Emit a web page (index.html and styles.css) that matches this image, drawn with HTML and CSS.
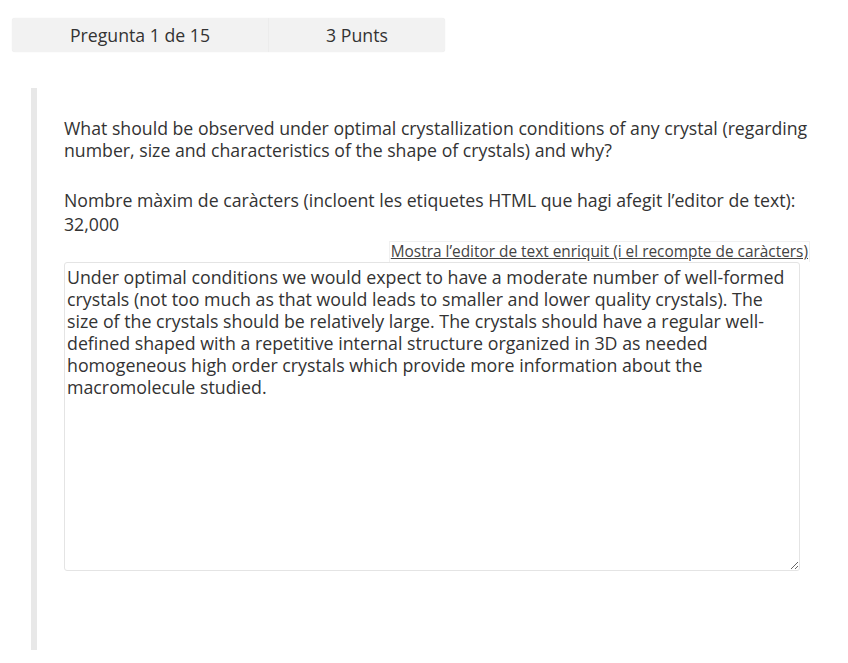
FILE: index.html
```html
<!DOCTYPE html>
<html>
<head>
<title>Pregunta 1 de 15</title>
<link rel="stylesheet" href="styles.css">
</head>
<body>
  <div class="info-bar">
    <div class="info-cell">Pregunta 1 de 15</div>
    <div class="info-cell">3 Punts</div>
  </div>
  <div class="question">
    <p class="prompt">What should be observed under optimal crystallization conditions of any crystal (regarding number, size and characteristics of the shape of crystals) and why?</p>
    <p class="limit">Nombre màxim de caràcters (incloent les etiquetes HTML que hagi afegit l’editor de text):<br>32,000</p>
    <div class="editor-toggle"><a href="#">Mostra l’editor de text enriquit (i el recompte de caràcters)</a></div>
    <textarea class="answer">Under optimal conditions we would expect to have a moderate number of well-formed crystals (not too much as that would leads to smaller and lower quality crystals). The size of the crystals should be relatively large. The crystals should have a regular well-defined shaped with a repetitive internal structure organized in 3D as needed homogeneous high order crystals which provide more information about the macromolecule studied.</textarea>
  </div>
</body>
</html>
```

FILE: styles.css
```css
body {
  margin: 0;
  font-family: "Open Sans", sans-serif;
  color: #333;
  background: #fff;
}

.info-bar {
  display: flex;
  width: 433px;
  height: 34px;
  margin: 18px 0 0 12px;
  background: #f2f2f2;
  border-radius: 3px;
  box-shadow: 0 0 1px #e2e2e2;
}

.info-cell {
  display: flex;
  align-items: center;
  justify-content: center;
  font-size: 17.7px;
  color: #333;
}
.info-cell:first-child {
  width: 256px;
  border-right: 1px solid #ececec;
}
.info-cell:last-child {
  flex: 1;
}

.question {
  margin: 36px 0 0 31px;
  height: 562px;
  width: 779px;
  box-sizing: border-box;
  border-left: 6px solid #e8e8e8;
  padding: 29px 0 0 27px;
}

.prompt {
  margin: 0 0 27px;
  font-size: 17.7px;
  line-height: 22px;
}

.limit {
  margin: 0 0 4px;
  font-size: 17.7px;
  line-height: 24px;
}

.editor-toggle {
  text-align: right;
}
.editor-toggle a {
  display: inline-block;
  font-size: 15.4px;
  line-height: 20px;
  color: #444;
  padding: 0 1px;
  border: 1px solid #f0f0f0;
  border-bottom: 0;
  text-decoration: underline;
}

.answer {
  display: block;
  width: 736px;
  height: 309px;
  box-sizing: border-box;
  margin: 0;
  padding: 4px 6px 4px 2px;
  font-family: "Open Sans", sans-serif;
  font-size: 17.8px;
  line-height: 21.9px;
  color: #333;
  border: 1px solid #e4e4e4;
  border-radius: 3px;
  resize: vertical;
}
```
